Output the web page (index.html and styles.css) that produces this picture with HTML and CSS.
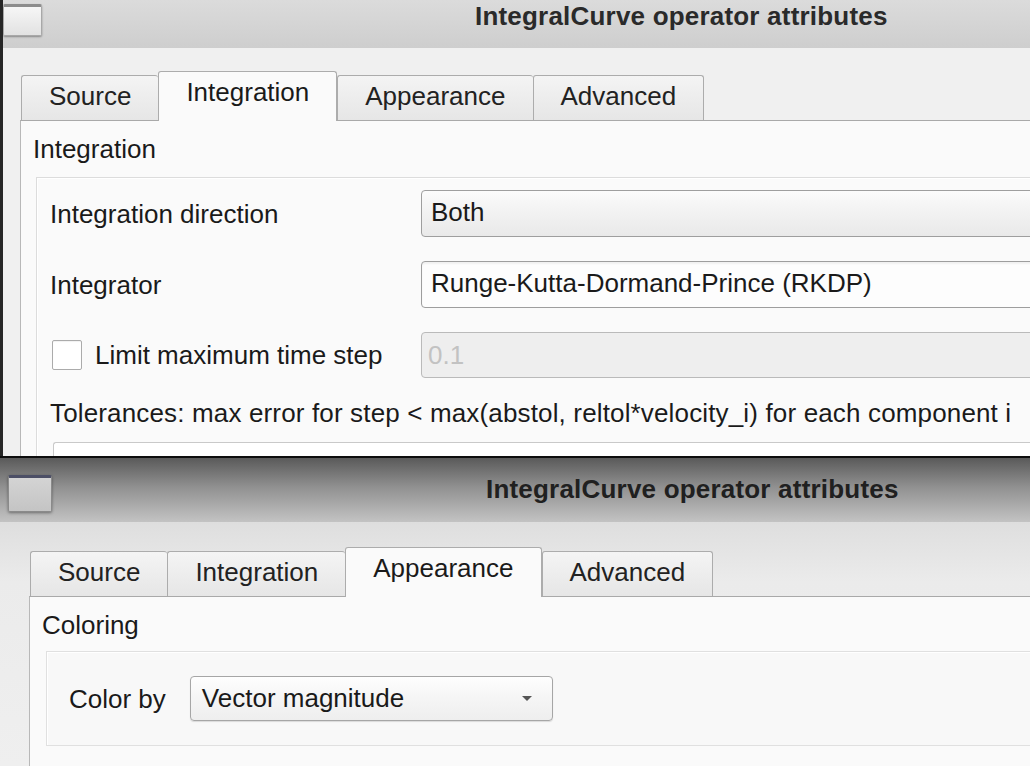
FILE: index.html
```html
<!DOCTYPE html>
<html>
<head>
<meta charset="utf-8">
<title>IntegralCurve operator attributes</title>
<link rel="stylesheet" href="styles.css">
</head>
<body>
<div class="screen">
  <section class="win win-top">
    <header class="titlebar titlebar-light">
      <span class="wicon"></span>
      <h1 class="title">IntegralCurve operator attributes</h1>
    </header>
    <div class="body body-top">
      <nav class="tabs">
        <span class="tab">Source</span>
        <span class="tab active">Integration</span>
        <span class="tab">Appearance</span>
        <span class="tab">Advanced</span>
      </nav>
      <div class="pane">
        <div class="group-label">Integration</div>
        <div class="group group-form">
          <div class="form">
            <span class="lbl">Integration direction</span>
            <div class="combo combo-shaded">Both</div>
            <span class="lbl">Integrator</span>
            <div class="combo combo-light">Runge-Kutta-Dormand-Prince (RKDP)</div>
            <label class="lbl check-lbl"><span class="checkbox"></span><span>Limit maximum time step</span></label>
            <div class="field disabled">0.1</div>
          </div>
          <p class="tol">Tolerances: max error for step &lt; max(abstol, reltol*velocity_i) for each component i</p>
          <div class="subbox"></div>
        </div>
      </div>
    </div>
  </section>
  <div class="sep"></div>
  <section class="win win-bottom">
    <header class="titlebar titlebar-dark">
      <span class="wicon wicon-dark"></span>
      <h1 class="title title-dark">IntegralCurve operator attributes</h1>
    </header>
    <div class="body body-bottom">
      <nav class="tabs">
        <span class="tab">Source</span>
        <span class="tab">Integration</span>
        <span class="tab active">Appearance</span>
        <span class="tab">Advanced</span>
      </nav>
      <div class="pane">
        <div class="group-label">Coloring</div>
        <div class="group group-color">
          <div class="color-row">
            <span class="lbl">Color by</span>
            <div class="combo combo-drop"><span>Vector magnitude</span><span class="arrow"></span></div>
          </div>
        </div>
      </div>
    </div>
  </section>
</div>
</body>
</html>
```

FILE: styles.css
```css
* { box-sizing: border-box; margin: 0; padding: 0; }
html, body { width: 1030px; height: 766px; overflow: hidden; }
body {
  font-family: "Liberation Sans", Arial, sans-serif;
  font-size: 26px;
  color: #1a1a1a;
  background: #1e1e1e;
}
.screen { display: flex; flex-direction: column; width: 1030px; height: 766px; }
.win { overflow: hidden; display: flex; flex-direction: column; flex: none; }
.win-top { height: 456px; border-left: 3px solid #262626; background: #f0f0f0; }
.sep { height: 2px; flex: none; background: #0d0d0d; }
.win-bottom { height: 308px; background: #f0f0f0; }

/* title bars */
.titlebar { display: flex; align-items: flex-start; flex: none; }
.titlebar-light { height: 48px; background: linear-gradient(#dbdbdb, #cecece); }
.titlebar-dark { height: 64px; background: linear-gradient(#5a5a5a, #909090 45%, #c3c3c3); }
.wicon {
  flex: none;
  margin-top: 4px;
  width: 39px; height: 32px;
  border: 1px solid #a8a8a8;
  border-top: 3px solid #8c8c8c;
  border-radius: 2px;
  background: linear-gradient(#f6f6f6, #e2e2e2);
  box-shadow: 0 1px 2px rgba(0,0,0,0.35);
}
.wicon-dark {
  margin: 17px 0 0 8px;
  width: 44px; height: 37px;
  border: 1px solid #8a8a8a;
  border-top: 3px solid #4c4f66;
  background: linear-gradient(#d4d4d4, #c4c4c4);
  box-shadow: 0 1px 3px rgba(0,0,0,0.4);
}
.title {
  font-size: 26px;
  font-weight: bold;
  line-height: 30px;
  letter-spacing: 0.2px;
  color: #2a2a2a;
  white-space: nowrap;
  margin: 1px 0 0 433px;
}
.title-dark { margin: 16px 0 0 434px; color: #202020; }

/* body */
.body { flex: 1; display: flex; flex-direction: column; min-height: 0; }
.body-top { padding: 23px 0 0 17px; background: #f0f0f0; }
.body-bottom { padding: 25px 0 0 29px; background: linear-gradient(#dedede, #ebebeb 60px, #efefef); }

/* tabs */
.tabs { display: flex; align-items: flex-end; height: 49px; padding-left: 1px; flex: none; }
.tab {
  height: 45px;
  padding: 5px 27px 0;
  line-height: 30px;
  white-space: nowrap;
  border: 1px solid #acacac;
  border-bottom: none;
  border-right: none;
  border-radius: 3px 3px 0 0;
  background: linear-gradient(#f4f4f4, #e6e6e6);
  color: #222;
}
.tab:last-child { border-right: 1px solid #acacac; }
.tab.active {
  height: 50px;
  margin-bottom: -1px;
  background: #fafafa;
  border-right: 1px solid #acacac;
  position: relative;
  z-index: 1;
  color: #1a1a1a;
}

/* pane */
.pane {
  flex: 1;
  border-top: 1px solid #a9a9a9;
  border-left: 1px solid #b8b8b8;
  background: #fafafa;
  padding: 13px 0 0 12px;
  white-space: nowrap;
}
.body-bottom .pane { padding-top: 13px; }
.group-label { line-height: 30px; }

.group {
  border: 1px solid #dcdcdc;
  border-right: none;
  background: #fafafa;
  box-shadow: inset 1px 1px 0 #ffffff;
}
.group-form { margin: 13px 0 0 3px; padding: 12px 0 0 13px; }
.group-color { margin: 11px 0 0 4px; padding: 24px 0 24px 22px; background: #f8f8f8; border-color: #e0e0e0; }

/* form */
.form {
  display: grid;
  grid-template-columns: 371px 700px;
  row-gap: 24px;
  align-items: center;
}
.lbl { line-height: 30px; }
.check-lbl { display: flex; align-items: center; }
.checkbox {
  width: 30px; height: 30px;
  margin: 0 13px 0 2px;
  border: 1px solid #ababab;
  border-radius: 2px;
  background: #ffffff;
  box-shadow: inset 0 1px 1px rgba(0,0,0,0.06);
}
.combo {
  height: 47px;
  line-height: 43px;
  padding-left: 9px;
  border: 1px solid #9e9e9e;
  border-radius: 4px;
  color: #1a1a1a;
}
.combo-shaded { background: linear-gradient(#fbfbfb, #f3f3f3 40%, #e9e9e9); }
.combo-light { background: #fdfdfd; box-shadow: inset 0 2px 2px rgba(0,0,0,0.05); }
.field {
  height: 46px;
  line-height: 44px;
  padding-left: 6px;
  border: 1px solid #bababa;
  border-radius: 4px;
}
.field.disabled { background: #eeeeee; color: #c2c2c2; }

.tol { line-height: 30px; margin-top: 20px; letter-spacing: 0.15px; }
.subbox {
  margin: 14px 0 0 3px;
  height: 40px;
  border: 1px solid #c9c9c9;
  border-right: none;
  border-radius: 3px 0 0 0;
  background: #ffffff;
}

/* appearance */
.color-row { display: flex; align-items: center; gap: 24px; }
.combo-drop {
  width: 363px;
  height: 45px;
  line-height: 41px;
  padding: 0 20px 0 11px;
  display: flex;
  justify-content: space-between;
  align-items: center;
  border-color: #a6a6a6;
  background: linear-gradient(#fefefe, #f5f5f5 50%, #eeeeee);
  box-shadow: 0 1px 1px rgba(0,0,0,0.12);
}
.arrow {
  width: 0; height: 0;
  border-left: 5px solid transparent;
  border-right: 5px solid transparent;
  border-top: 5px solid #555;
}
```
